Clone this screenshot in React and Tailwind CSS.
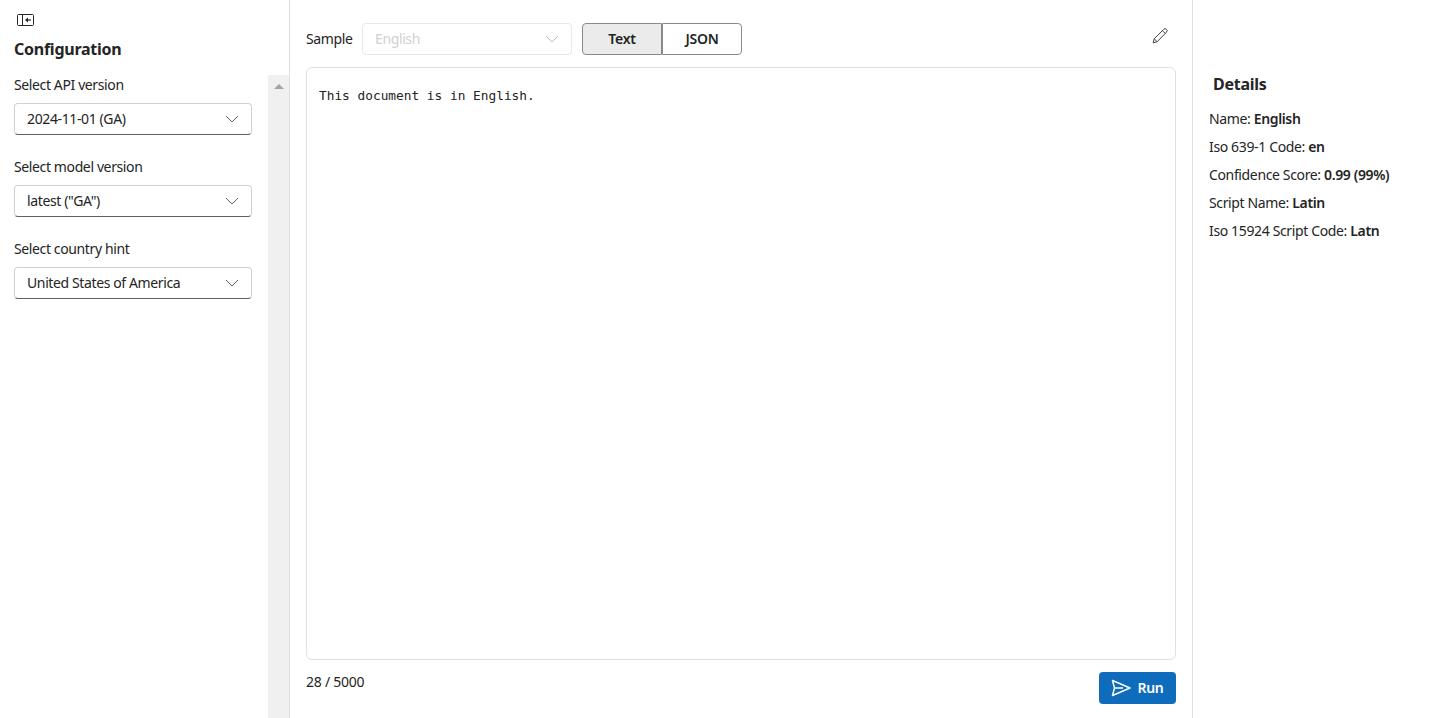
function Chevron({ color = "#616161" }) {
  return (
    <svg width="14" height="14" viewBox="0 0 14 14" fill="none" className="shrink-0">
      <path d="M1 4l6 6 6-6" stroke={color} strokeWidth="1" />
    </svg>
  );
}

function Field({ label, value }) {
  return (
    <div className="flex flex-col">
      <div className="h-5 text-[14px] leading-[18px] tracking-[-0.38px] text-[#242424]">{label}</div>
      <div className="mt-[7px] flex h-8 w-[238px] items-center justify-between rounded border border-[#d1d1d1] border-b-[#616161] pl-3 pr-[12px] text-[14px] tracking-[-0.38px] text-[#242424]">
        <span className="pb-px">{value}</span>
        <Chevron />
      </div>
    </div>
  );
}

export default function App() {
  return (
    <div className="flex h-[718px] w-[1436px] overflow-hidden bg-white font-['Noto_Sans',sans-serif] text-[#242424] tracking-[-0.25px]">
      <aside className="flex w-[290px] shrink-0 border-r border-[#e0e0e0]">
        <div className="flex w-[268px] shrink-0 flex-col pl-[14px]">
          <svg width="18" height="14" viewBox="0 0 18 14" fill="none" className="ml-[3px] mt-[13px]">
            <rect x="0.5" y="1.5" width="16" height="11" rx="1" stroke="#242424" />
            <path d="M5.5 1.5v11" stroke="#242424" />
            <path d="M9 7h5" stroke="#242424" strokeWidth="1.2" />
            <path d="M8 7l3-2.5v5z" fill="#242424" />
          </svg>
          <h2 className="mt-[10px] h-6 text-[16px] font-bold leading-6 text-[#242424]">Configuration</h2>
          <div className="mt-[15px] flex flex-col gap-[23px]">
            <Field label="Select API version" value="2024-11-01 (GA)" />
            <Field label="Select model version" value={'latest ("GA")'} />
            <Field label="Select country hint" value="United States of America" />
          </div>
        </div>
        <div className="mt-[75px] flex w-[21px] shrink-0 justify-center bg-[#f0f0f0] pt-[9px]">
          <div className="h-0 w-0 border-x-[5px] border-b-[5px] border-x-transparent border-b-[#a3a3a3]" />
        </div>
      </aside>

      <main className="flex w-[903px] shrink-0 flex-col border-r border-[#e0e0e0] pl-4 pr-4">
        <div className="mt-[23px] flex h-8 items-center">
          <span className="w-[56px] pb-px text-[14px] tracking-[-0.38px]">Sample</span>
          <div className="flex h-8 w-[210px] items-center justify-between rounded border border-[#e8e8e8] pl-3 pr-[12px] text-[14px] tracking-[-0.38px] text-[#d1d1d1]">
            <span className="pb-px">English</span>
            <Chevron color="#bdbdbd" />
          </div>
          <div className="ml-[10px] flex">
            <div className="flex h-8 w-[80px] items-center justify-center rounded-l border border-[#8a8a8a] bg-[#ebebeb] pb-px text-[14px] font-semibold">Text</div>
            <div className="flex h-8 w-[80px] items-center justify-center rounded-r border border-[#8a8a8a] pb-px text-[14px] font-semibold">JSON</div>
          </div>
          <svg width="20" height="20" viewBox="0 0 20 20" fill="none" className="ml-auto mb-[6px] mr-[6px]">
            <path d="M3.2 16.8l1-4L13.6 3.4a1.8 1.8 0 012.8 0 1.8 1.8 0 010 2.8L7.1 15.8l-3.9 1zM12.4 4.6l3 3M4.2 12.8l3 3" stroke="#424242" strokeWidth="1" strokeLinejoin="round" />
          </svg>
        </div>
        <div className="mt-[12px] h-[593px] w-[870px] rounded-md border border-[#e0e0e0] px-3 pt-[19px] font-['DejaVu_Sans_Mono',monospace] text-[12.8px] leading-[18px] tracking-normal text-[#242424]">
          This document is in English.
        </div>
        <div className="flex w-[870px] items-start justify-between">
          <span className="mt-[12px] text-[14px] leading-5">28 / 5000</span>
          <button className="mt-[12px] flex h-8 w-[77px] items-center justify-center gap-[6px] rounded bg-[#0f6cbd] pb-px text-[14px] font-semibold text-white">
            <svg width="20" height="20" viewBox="0 0 20 20" fill="none">
              <path d="M1.5 2.5L19 10 1.5 17.5 3.5 10 1.5 2.5zM3.5 10H12" stroke="#fff" strokeWidth="1.5" strokeLinejoin="round" />
            </svg>
            Run
          </button>
        </div>
      </main>

      <section className="flex flex-1 flex-col pl-4">
        <h3 className="ml-[4px] mt-[73px] h-[22px] text-[16px] font-bold leading-[22px]">Details</h3>
        <div className="mt-[10px] flex flex-col text-[14px] leading-[28px] tracking-[-0.36px]">
          <div>Name: <span className="font-semibold">English</span></div>
          <div>Iso 639-1 Code: <span className="font-semibold">en</span></div>
          <div>Confidence Score: <span className="font-semibold">0.99 (99%)</span></div>
          <div>Script Name: <span className="font-semibold">Latin</span></div>
          <div>Iso 15924 Script Code: <span className="font-semibold">Latn</span></div>
        </div>
      </section>
    </div>
  );
}
